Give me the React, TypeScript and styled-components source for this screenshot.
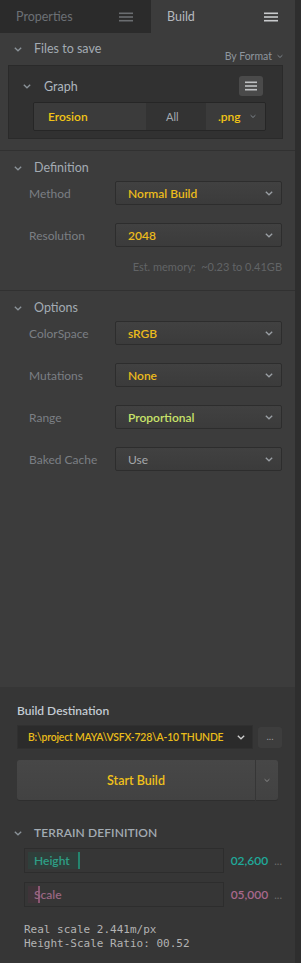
import React from "react";
import styled, { createGlobalStyle } from "styled-components";

const GlobalStyle = createGlobalStyle`
  html, body { margin: 0; padding: 0; background: #3c3c3c; }
  body { font-family: Lato, "Noto Sans", sans-serif; -webkit-font-smoothing: antialiased; }
  * { box-sizing: border-box; }
`;

const Frame = styled.div`
  width: 301px;
  height: 963px;
  display: flex;
  background: #3c3c3c;
  overflow: hidden;
`;

const Main = styled.div`
  flex: 1;
  display: flex;
  flex-direction: column;
  min-width: 0;
`;

const ScrollStrip = styled.div`
  width: 6px;
  background: #2e2e2e;
`;

/* ---------- Tabs ---------- */
const TabBar = styled.div`
  height: 33px;
  display: flex;
`;

const Tab = styled.div<{ $active?: boolean }>`
  width: ${(p) => (p.$active ? "auto" : "151px")};
  flex: ${(p) => (p.$active ? 1 : "none")};
  display: flex;
  align-items: center;
  justify-content: space-between;
  padding: 0 ${(p) => (p.$active ? "17px" : "18px")} 0 16px;
  background: ${(p) => (p.$active ? "#3c3c3c" : "#2b2b2b")};
  color: ${(p) => (p.$active ? "#b4b9be" : "#6b7075")};
  font-size: 12.5px;
`;

const Hamburger = ({ color, width = 14 }: { color: string; width?: number }) => (
  <svg width={width} height="10" viewBox={`0 0 ${width} 10`}>
    <rect x="0" y="0.5" width={width} height="1.6" fill={color} />
    <rect x="0" y="4.2" width={width} height="1.6" fill={color} />
    <rect x="0" y="7.9" width={width} height="1.6" fill={color} />
  </svg>
);

/* ---------- Sections ---------- */
const Content = styled.div`
  flex: 1;
  display: flex;
  flex-direction: column;
`;

const Section = styled.section<{ $divider?: boolean }>`
  display: flex;
  flex-direction: column;
  border-bottom: ${(p) => (p.$divider ? "1px solid #313131" : "none")};
`;

const FilesSection = styled(Section)`
  height: 118px;
  padding: 8px 12px 0 8px;
`;

const HeaderRow = styled.div`
  display: flex;
  align-items: center;
  gap: 12px;
  height: 16px;
  padding-left: 6px;
`;

const FilesHeader = styled.div`
  display: flex;
  justify-content: space-between;
  height: 24px;
`;

const SectionTitle = styled.span<{ $caps?: boolean }>`
  color: #a3abb3;
  font-size: ${(p) => (p.$caps ? "12px" : "12.5px")};
  font-weight: ${(p) => (p.$caps ? 600 : 400)};
  letter-spacing: ${(p) => (p.$caps ? "0.1px" : "0")};
  line-height: 16px;
`;

const ByFormat = styled.span`
  align-self: flex-end;
  margin-bottom: 2px;
  display: flex;
  align-items: center;
  gap: 5px;
  color: #8e969e;
  font-size: 10.5px;
  line-height: 14px;
`;

const Chevron = ({ color = "#8b9399", w = 8 }: { color?: string; w?: number }) => (
  <svg width={w} height="5" viewBox="0 0 8 5" style={{ flex: "none" }}>
    <polyline points="0.8,0.8 4,3.8 7.2,0.8" fill="none" stroke={color} strokeWidth="1.3" />
  </svg>
);

const GraphBox = styled.div`
  width: 275px;
  height: 74px;
  background: #313131;
  border: 1px solid #2a2a2a;
  display: flex;
  flex-direction: column;
  padding: 10px 19px 0 14px;
`;

const GraphHeader = styled.div`
  display: flex;
  align-items: center;
  height: 20px;
  gap: 13px;
`;

const GraphTitle = styled.span`
  flex: 1;
  color: #aeb6be;
  font-size: 12.5px;
`;

const MenuButton = styled.div`
  width: 24px;
  height: 20px;
  border-radius: 3px;
  background: #4a4a4a;
  display: flex;
  align-items: center;
  justify-content: center;
`;

const OutputRow = styled.div`
  margin: 6px 0 0 10px;
  width: 233px;
  height: 29px;
  display: flex;
  border: 1px solid #262626;
  border-radius: 2px;
  overflow: hidden;
`;

const OutputCell = styled.div<{ $w: number; $dark?: boolean; $pad: number }>`
  width: ${(p) => p.$w}px;
  display: flex;
  align-items: center;
  justify-content: space-between;
  padding: 0 9px 0 ${(p) => p.$pad}px;
  background: ${(p) => (p.$dark ? "#333333" : "#3b3b3b")};
  font-size: 12px;
`;

const CellText = styled.span<{ $tone: "yellow" | "muted" }>`
  color: ${(p) => (p.$tone === "yellow" ? "#f2c416" : "#a3aab2")};
  font-weight: ${(p) => (p.$tone === "yellow" ? 600 : 400)};
  font-size: ${(p) => (p.$tone === "yellow" ? "12px" : "11px")};
`;

/* ---------- Field rows ---------- */
const PropSection = styled(Section)<{ $h?: number }>`
  padding: 9px 13px 0 8px;
  ${(p) => (p.$h ? `height: ${p.$h}px;` : "")}
`;

const FieldList = styled.div`
  display: flex;
  flex-direction: column;
  gap: 18px;
  margin-top: 5px;
`;

const FieldRow = styled.div`
  display: flex;
  align-items: center;
  padding-left: 21px;
`;

const FieldLabel = styled.span`
  width: 86px;
  color: #7b7f84;
  font-size: 12px;
`;

const Select = styled.div`
  width: 167px;
  height: 24px;
  display: flex;
  align-items: center;
  justify-content: space-between;
  padding: 0 8px 0 12px;
  background: linear-gradient(#414141, #3b3b3b);
  border: 1px solid #2d2d2d;
  border-radius: 2px;
`;

type Tone = "yellow" | "lime" | "grey";
const toneColor: Record<Tone, string> = {
  yellow: "#ecbb1c",
  lime: "#c9e36a",
  grey: "#a5a8ab",
};

const SelectValue = styled.span<{ $tone: Tone }>`
  color: ${(p) => toneColor[p.$tone]};
  font-size: 12px;
  font-weight: ${(p) => (p.$tone === "grey" ? 400 : 600)};
`;

const Note = styled.div`
  align-self: flex-end;
  margin-top: 13px;
  color: #626466;
  font-size: 11px;
  line-height: 14px;
`;

/* ---------- Bottom panel ---------- */
const BottomPanel = styled.div`
  height: 276px;
  background: #363636;
  display: flex;
  flex-direction: column;
  padding: 16px 13px 0 17px;
`;

const DestLabel = styled.div`
  color: #c3cbd3;
  font-size: 12px;
  font-weight: 600;
  line-height: 16px;
`;

const DestRow = styled.div`
  display: flex;
  align-items: center;
  gap: 5px;
  margin-top: 6px;
`;

const PathSelect = styled.div`
  width: 236px;
  height: 24px;
  background: #2b2b2b;
  border: 1px solid #303030;
  display: flex;
  align-items: center;
  padding: 0 7px 0 10px;
  gap: 6px;
`;

const PathText = styled.span`
  flex: 1;
  min-width: 0;
  white-space: nowrap;
  color: #eabd1a;
  font-size: 10.4px;
  letter-spacing: -0.2px;
  font-weight: 600;
`;

const MoreButton = styled.div`
  width: 24px;
  height: 21px;
  border-radius: 3px;
  background: #3d3d3d;
  color: #9a9a9a;
  font-size: 10px;
  display: flex;
  align-items: center;
  justify-content: center;
  padding-bottom: 2px;
`;

const BuildGroup = styled.div`
  display: flex;
  margin-top: 11px;
  height: 40px;
  gap: 1px;
`;

const BuildMain = styled.div`
  width: 238px;
  background: linear-gradient(#474747, #424242);
  border-radius: 3px 0 0 3px;
  display: flex;
  align-items: center;
  justify-content: center;
  color: #f0c11a;
  font-size: 12.5px;
  font-weight: 600;
  box-shadow: 0 1px 0 #2e2e2e;
`;

const BuildArrow = styled.div`
  width: 22px;
  background: linear-gradient(#474747, #424242);
  border-radius: 0 3px 3px 0;
  display: flex;
  align-items: center;
  justify-content: center;
  box-shadow: 0 1px 0 #2e2e2e;
`;

const TerrainHeader = styled(HeaderRow)`
  margin-top: 25px;
  margin-left: -9px;
`;

const SliderList = styled.div`
  display: flex;
  flex-direction: column;
  gap: 9px;
  margin-top: 7px;
  padding-left: 7px;
`;

const SliderRow = styled.div`
  display: flex;
  align-items: center;
  gap: 7px;
`;

type SliderTone = "teal" | "pink";
const sliderColors: Record<SliderTone, { fill: string; text: string; value: string; cursor: string }> = {
  teal: { fill: "#2f3f3b", text: "#2e9f86", value: "#1fa99a", cursor: "#24866f" },
  pink: { fill: "#3f3439", text: "#9a6783", value: "#a8688c", cursor: "#8b5572" },
};

const SliderBox = styled.div`
  position: relative;
  width: 201px;
  height: 25px;
  border: 1px solid #2d2d2d;
  padding: 3px;
  display: flex;
`;

const SliderFill = styled.div<{ $tone: SliderTone }>`
  height: 100%;
  background: ${(p) => sliderColors[p.$tone].fill};
  border-right: 2px solid ${(p) => sliderColors[p.$tone].cursor};
`;

const SliderLabel = styled.span<{ $tone: SliderTone }>`
  position: absolute;
  left: 9px;
  top: 0;
  bottom: 0;
  display: flex;
  align-items: center;
  color: ${(p) => sliderColors[p.$tone].text};
  font-size: 12px;
  font-weight: 600;
`;

const SliderValue = styled.span<{ $tone: SliderTone }>`
  color: ${(p) => sliderColors[p.$tone].value};
  font-size: 12px;
  font-weight: 600;
`;

const Ellipsis = styled.span`
  color: #6c6c6c;
  font-size: 11px;
  margin-left: -1px;
`;

const MonoInfo = styled.div`
  margin-top: 16px;
  padding-left: 7px;
  font-family: "DejaVu Sans Mono", "Liberation Mono", monospace;
  font-size: 11px;
  line-height: 14px;
  color: #b3b3b3;
  white-space: pre;
`;

const fields1 = [
  { label: "Method", value: "Normal Build", tone: "yellow" as Tone },
  { label: "Resolution", value: "2048", tone: "yellow" as Tone },
];

const fields2 = [
  { label: "ColorSpace", value: "sRGB", tone: "yellow" as Tone },
  { label: "Mutations", value: "None", tone: "yellow" as Tone },
  { label: "Range", value: "Proportional", tone: "lime" as Tone },
  { label: "Baked Cache", value: "Use", tone: "grey" as Tone },
];

const sliders = [
  { label: "Height", value: "02,600", tone: "teal" as SliderTone, fill: 52 },
  { label: "Scale", value: "05,000", tone: "pink" as SliderTone, fill: 12 },
];

export default function App() {
  return (
    <>
      <GlobalStyle />
      <Frame>
        <Main>
          <TabBar>
            <Tab>
              <span>Properties</span>
              <Hamburger color="#6a6d70" />
            </Tab>
            <Tab $active>
              <span>Build</span>
              <Hamburger color="#c9cbcd" />
            </Tab>
          </TabBar>
          <Content>
            <FilesSection $divider>
              <FilesHeader>
                <HeaderRow>
                  <Chevron />
                  <SectionTitle>Files to save</SectionTitle>
                </HeaderRow>
                <ByFormat>
                  By Format <Chevron w={6} color="#7e858c" />
                </ByFormat>
              </FilesHeader>
              <GraphBox>
                <GraphHeader>
                  <Chevron />
                  <GraphTitle>Graph</GraphTitle>
                  <MenuButton>
                    <Hamburger color="#bfc1c3" width={12} />
                  </MenuButton>
                </GraphHeader>
                <OutputRow>
                  <OutputCell $w={112} $pad={14}>
                    <CellText $tone="yellow">Erosion</CellText>
                  </OutputCell>
                  <OutputCell $w={60} $pad={20} $dark>
                    <CellText $tone="muted">All</CellText>
                  </OutputCell>
                  <OutputCell $w={59} $pad={12}>
                    <CellText $tone="yellow">.png</CellText>
                    <Chevron w={6} color="#7e858c" />
                  </OutputCell>
                </OutputRow>
              </GraphBox>
            </FilesSection>

            <PropSection $divider $h={140}>
              <HeaderRow>
                <Chevron />
                <SectionTitle>Definition</SectionTitle>
              </HeaderRow>
              <FieldList>
                {fields1.map((f) => (
                  <FieldRow key={f.label}>
                    <FieldLabel>{f.label}</FieldLabel>
                    <Select>
                      <SelectValue $tone={f.tone}>{f.value}</SelectValue>
                      <Chevron color="#9a9fa4" />
                    </Select>
                  </FieldRow>
                ))}
              </FieldList>
              <Note>Est. memory:&nbsp; ~0.23 to 0.41GB</Note>
            </PropSection>

            <PropSection>
              <HeaderRow>
                <Chevron />
                <SectionTitle>Options</SectionTitle>
              </HeaderRow>
              <FieldList>
                {fields2.map((f) => (
                  <FieldRow key={f.label}>
                    <FieldLabel>{f.label}</FieldLabel>
                    <Select>
                      <SelectValue $tone={f.tone}>{f.value}</SelectValue>
                      <Chevron color="#9a9fa4" />
                    </Select>
                  </FieldRow>
                ))}
              </FieldList>
            </PropSection>
          </Content>

          <BottomPanel>
            <DestLabel>Build Destination</DestLabel>
            <DestRow>
              <PathSelect>
                <PathText>B:\project MAYA\VSFX-728\A-10 THUNDE</PathText>
                <Chevron color="#d0d0d0" />
              </PathSelect>
              <MoreButton>...</MoreButton>
            </DestRow>
            <BuildGroup>
              <BuildMain>Start Build</BuildMain>
              <BuildArrow>
                <Chevron w={6} color="#8a8a8a" />
              </BuildArrow>
            </BuildGroup>
            <TerrainHeader>
              <Chevron />
              <SectionTitle $caps>TERRAIN DEFINITION</SectionTitle>
            </TerrainHeader>
            <SliderList>
              {sliders.map((s) => (
                <SliderRow key={s.label}>
                  <SliderBox>
                    <SliderFill $tone={s.tone} style={{ width: `${s.fill}px` }} />
                    <SliderLabel $tone={s.tone}>{s.label}</SliderLabel>
                  </SliderBox>
                  <SliderValue $tone={s.tone}>{s.value}</SliderValue>
                  <Ellipsis>...</Ellipsis>
                </SliderRow>
              ))}
            </SliderList>
            <MonoInfo>{"Real scale 2.441m/px\nHeight-Scale Ratio: 00.52"}</MonoInfo>
          </BottomPanel>
        </Main>
        <ScrollStrip />
      </Frame>
    </>
  );
}
